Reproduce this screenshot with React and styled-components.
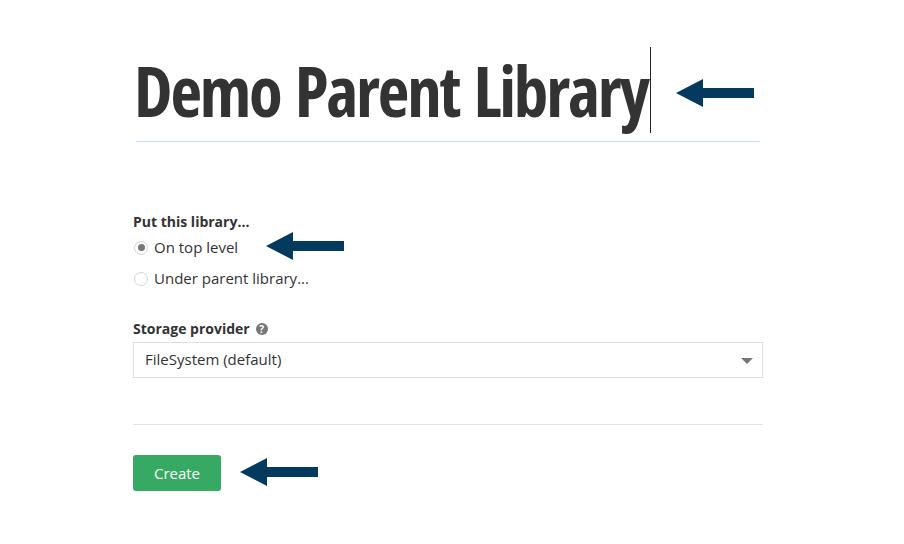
import styled, { createGlobalStyle } from 'styled-components';

const GlobalStyle = createGlobalStyle`
  html, body {
    margin: 0;
    background: #fff;
  }
  body {
    font-family: "Open Sans", "Liberation Sans", sans-serif;
    font-size: 15px;
    color: #333;
  }
`;

const Page = styled.div`
  position: relative;
  width: 904px;
  height: 544px;
  padding: 47px 0 0 133px;
  box-sizing: border-box;
`;

const Form = styled.div`
  width: 630px;
  display: flex;
  flex-direction: column;
`;

const TitleField = styled.div`
  margin: 0 3px;
  padding-bottom: 8px;
  border-bottom: 1px solid #c4e0f6;
  display: flex;
  align-items: center;
`;

const TitleText = styled.h1`
  margin: 0 0 0 -2px;
  font-family: "Open Sans", sans-serif;
  font-weight: 700;
  font-stretch: 75%;
  font-size: 69px;
  line-height: 86px;
  color: #333;
  letter-spacing: -2.2px;
  word-spacing: 4px;
  white-space: nowrap;
`;

const Caret = styled.span`
  width: 1px;
  height: 86px;
  background: #222;
  margin-left: 2px;
`;

const Section = styled.div`
  display: flex;
  flex-direction: column;
  margin-top: ${p => p.$top}px;
`;

const Label = styled.div`
  font-size: 14px;
  font-weight: 700;
  line-height: 20px;
  display: flex;
  align-items: center;
  gap: 6px;
`;

const RadioRow = styled.label`
  height: 31px;
  display: flex;
  align-items: center;
  gap: 6px;
  color: #333;
  padding-bottom: 2px;
  box-sizing: border-box;
`;

const RadioCircle = styled.span`
  width: 14px;
  height: 14px;
  margin: 2px 0 0 1px;
  border-radius: 50%;
  border: 1px solid #d4d4d4;
  background: #fff;
  display: flex;
  align-items: center;
  justify-content: center;
  box-sizing: border-box;
  &::after {
    content: '';
    width: 7px;
    height: 7px;
    border-radius: 50%;
    background: ${p => (p.$checked ? '#777' : 'transparent')};
  }
`;

const HelpIcon = styled.span`
  width: 12px;
  height: 12px;
  border-radius: 50%;
  background: #777;
  color: #fff;
  font-size: 10px;
  font-weight: 700;
  line-height: 12px;
  text-align: center;
`;

const Select = styled.div`
  margin-top: 3px;
  height: 36px;
  border: 1px solid #ddd;
  box-sizing: border-box;
  padding: 0 9px 2px 11px;
  display: flex;
  align-items: center;
  justify-content: space-between;
  color: #333;
`;

const SelectArrow = styled.span`
  width: 0;
  height: 0;
  margin-top: 3px;
  border-left: 6px solid transparent;
  border-right: 6px solid transparent;
  border-top: 6px solid #777;
`;

const Divider = styled.div`
  margin-top: 46px;
  height: 1px;
  background: #e3e3e3;
`;

const CreateButton = styled.button`
  margin-top: 30px;
  width: 88px;
  height: 36px;
  border: none;
  border-radius: 3px;
  background: #36aa62;
  color: #fff;
  font-family: "Open Sans", sans-serif;
  font-size: 15px;
  cursor: pointer;
  align-self: flex-start;
`;

const Annotation = styled.svg`
  position: absolute;
  left: ${p => p.$x}px;
  top: ${p => p.$y}px;
`;

const Arrow = ({ x, y }) => (
  <Annotation $x={x} $y={y} width="78" height="28" viewBox="0 0 78 28">
    <path d="M0 14 L27 0 L27 9 L78 9 L78 19 L27 19 L27 28 Z" fill="#043a5e" />
  </Annotation>
);

export default function App() {
  return (
    <>
      <GlobalStyle />
      <Page>
        <Form>
          <TitleField>
            <TitleText>Demo Parent Library</TitleText>
            <Caret />
          </TitleField>

          <Section $top={70}>
            <Label>Put this library...</Label>
            <RadioRow>
              <RadioCircle $checked />
              On top level
            </RadioRow>
            <RadioRow>
              <RadioCircle />
              Under parent library...
            </RadioRow>
          </Section>

          <Section $top={25}>
            <Label>
              Storage provider
              <HelpIcon>?</HelpIcon>
            </Label>
            <Select>
              FileSystem (default)
              <SelectArrow />
            </Select>
          </Section>

          <Divider />
          <CreateButton>Create</CreateButton>
        </Form>

        <Arrow x={676} y={79} />
        <Arrow x={266} y={232} />
        <Arrow x={240} y={458} />
      </Page>
    </>
  );
}
